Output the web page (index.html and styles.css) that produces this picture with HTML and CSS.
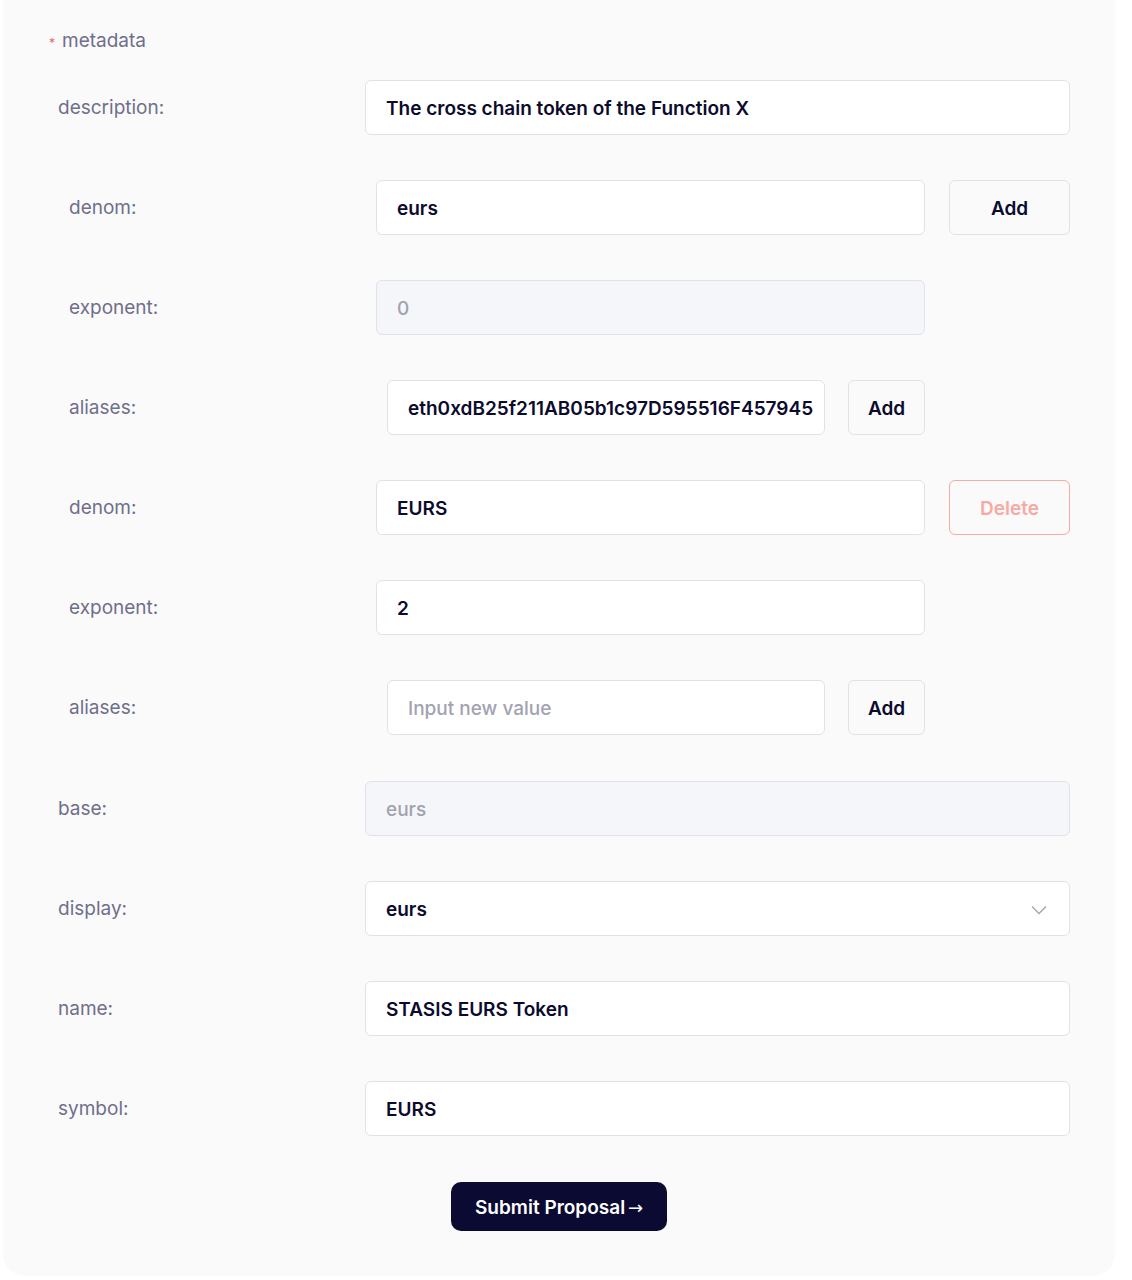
FILE: index.html
```html
<!DOCTYPE html>
<html lang="en">
<head>
<meta charset="utf-8">
<title>Metadata</title>
<link rel="stylesheet" href="styles.css">
</head>
<body>
<div class="panel">
  <div class="group-title"><span class="req">*</span>metadata</div>

  <div class="row">
    <div class="label">description:</div>
    <div class="field"><div class="input">The cross chain token of the Function X</div></div>
  </div>

  <div class="unit">
    <div class="row">
      <div class="label">denom:</div>
      <div class="field"><div class="input">eurs</div></div>
      <div class="side"><button class="btn">Add</button></div>
    </div>
    <div class="row">
      <div class="label">exponent:</div>
      <div class="field"><div class="input disabled">0</div></div>
      <div class="side"></div>
    </div>
    <div class="row">
      <div class="label">aliases:</div>
      <div class="field alias">
        <div class="input">eth0xdB25f211AB05b1c97D595516F457945</div>
        <button class="btn small">Add</button>
      </div>
      <div class="side"></div>
    </div>
    <div class="row">
      <div class="label">denom:</div>
      <div class="field"><div class="input">EURS</div></div>
      <div class="side"><button class="btn danger">Delete</button></div>
    </div>
    <div class="row">
      <div class="label">exponent:</div>
      <div class="field"><div class="input">2</div></div>
      <div class="side"></div>
    </div>
    <div class="row">
      <div class="label">aliases:</div>
      <div class="field alias">
        <div class="input placeholder">Input new value</div>
        <button class="btn small">Add</button>
      </div>
      <div class="side"></div>
    </div>
  </div>

  <div class="row">
    <div class="label">base:</div>
    <div class="field"><div class="input disabled">eurs</div></div>
  </div>

  <div class="row">
    <div class="label">display:</div>
    <div class="field">
      <div class="input select">
        <span>eurs</span>
        <svg class="chev" width="16" height="10" viewBox="0 0 16 10" aria-hidden="true"><path d="M1 1.5 L8 8.5 L15 1.5" fill="none" stroke="#a3a3b3" stroke-width="1.3"/></svg>
      </div>
    </div>
  </div>

  <div class="row">
    <div class="label">name:</div>
    <div class="field"><div class="input">STASIS EURS Token</div></div>
  </div>

  <div class="row">
    <div class="label">symbol:</div>
    <div class="field"><div class="input">EURS</div></div>
  </div>

  <div class="actions">
    <button class="submit">Submit Proposal <span class="arrow">→</span></button>
  </div>
</div>
</body>
</html>
```

FILE: styles.css
```css
* { box-sizing: border-box; }

html, body {
  margin: 0;
  padding: 0;
  background: #ffffff;
}

body {
  font-family: Inter, "Noto Sans", sans-serif;
  color: #0b0b2e;
}

.panel {
  margin-left: 3px;
  width: 1112px;
  background: #fafafa;
  border-radius: 0 0 22px 22px;
  padding: 28px 45px 45px 55px;
  display: flex;
  flex-direction: column;
}

.group-title {
  display: flex;
  align-items: center;
  gap: 7px;
  font-size: 19px;
  color: #6f6f8a;
  line-height: 26px;
  margin-left: -9px;
  margin-bottom: 26px;
}

.req {
  color: #f0625c;
  font-size: 12px;
  line-height: 12px;
  padding-top: 4px;
}

.row {
  display: flex;
  align-items: center;
  height: 55px;
  margin-bottom: 45px;
}

.unit {
  display: flex;
  flex-direction: column;
  padding-left: 11px;
  margin-bottom: 1px;
}

.label {
  width: 307px;
  flex: none;
  font-size: 19px;
  color: #6f6f8a;
}

.field {
  flex: 1;
  min-width: 0;
  display: flex;
  align-items: center;
}

.field.alias {
  padding-left: 11px;
  gap: 23px;
}

.side {
  width: 145px;
  flex: none;
  display: flex;
  justify-content: flex-end;
}

.input {
  flex: 1;
  min-width: 0;
  height: 55px;
  border: 1px solid #e1e1ea;
  border-radius: 6px;
  background: #ffffff;
  padding: 2px 20px 0;
  display: flex;
  align-items: center;
  font-size: 19px;
  font-weight: 600;
  color: #0b0b2e;
  white-space: nowrap;
  overflow: hidden;
}

.input.disabled {
  background: #f5f6fa;
  color: #a2a2ae;
  font-weight: 500;
}

.input.placeholder {
  color: #a2a2b2;
  font-weight: 500;
}

.input.select {
  justify-content: space-between;
  padding-right: 22px;
}

.chev { flex: none; }

.btn {
  height: 55px;
  width: 121px;
  border: 1px solid #e1e1ea;
  border-radius: 6px;
  background: #fafafa;
  font-family: inherit;
  font-size: 19px;
  font-weight: 600;
  color: #0b0b2e;
  padding: 2px 0 0;
}

.btn.small {
  width: 77px;
  flex: none;
}

.btn.danger {
  border-color: #f6aaa3;
  color: #f6aaa3;
}

.actions {
  display: flex;
  justify-content: center;
  margin-left: -10px;
  margin-top: 1px;
}

.submit {
  height: 49px;
  width: 216px;
  border: none;
  border-radius: 10px;
  background: #0a0a33;
  color: #ffffff;
  font-family: inherit;
  font-size: 19px;
  font-weight: 600;
  padding: 1px 0 0;
}

.arrow {
  font-family: "DejaVu Sans", sans-serif;
  font-weight: 400;
  font-size: 18px;
  margin-left: -2px;
}
```
